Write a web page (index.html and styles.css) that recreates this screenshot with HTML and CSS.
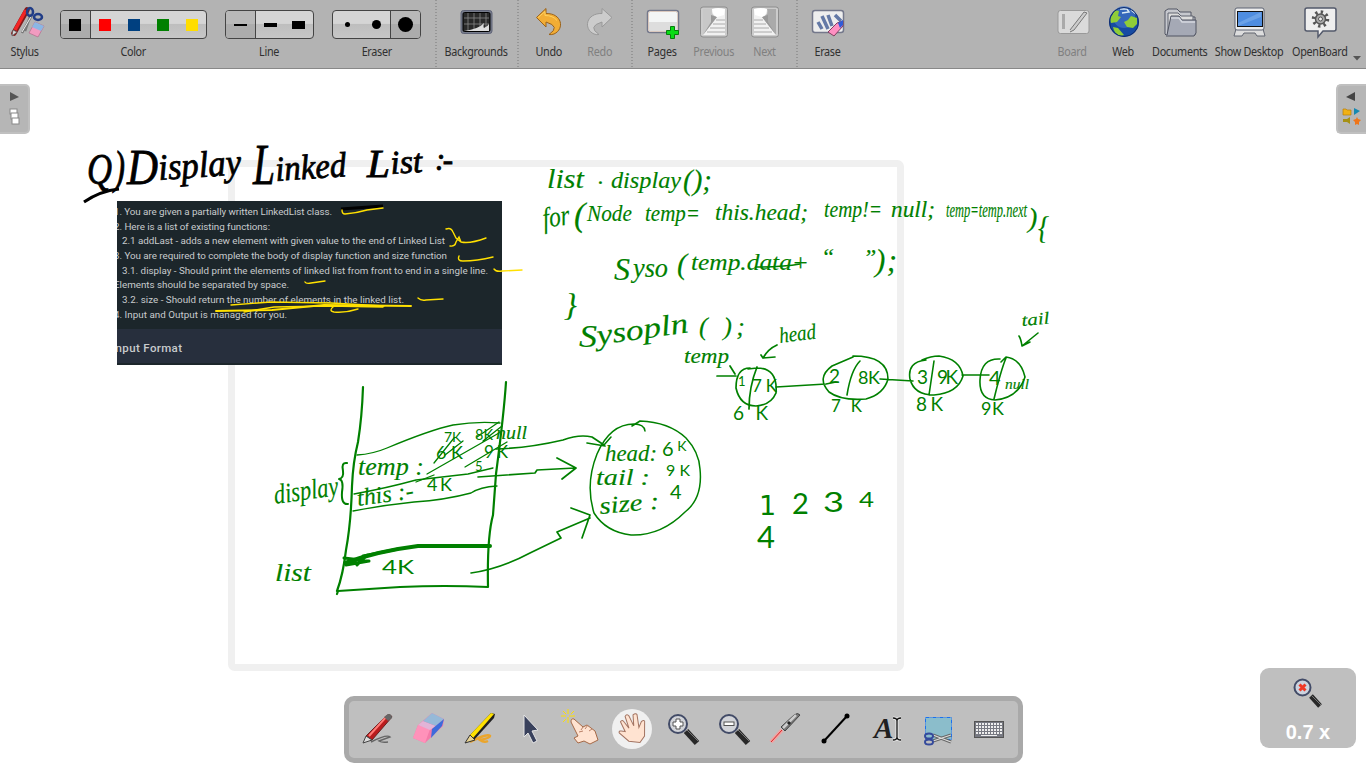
FILE: index.html
```html
<!DOCTYPE html>
<html lang="en">
<head>
<meta charset="utf-8">
<title>OpenBoard</title>
<link rel="stylesheet" href="styles.css">
</head>
<body>
<header class="toolbar">
  <div class="tool stylus"><svg class="icon" viewBox="0 0 40 36"><path d="M9 29 22 6" stroke="#801b1b" stroke-width="5.500" stroke-linecap="round"/><path d="M10 26 21 6" stroke="#f32424" stroke-width="3.500"/><path d="M7 32 8 26 12 28Z" fill="#ddd" stroke="#555" stroke-width=".7"/><path d="m17 29 10-18M20 27l6-17" stroke="#777" stroke-width="2.500"/><path d="m17 28 10-17" stroke="#eee"/><g fill="none" stroke="#213d87" stroke-width="2.500"><ellipse cx="25" cy="8" rx="3" ry="4"/><ellipse cx="33" cy="13" rx="4" ry="3"/></g><path d="m30 18 9 4-6 11-9-4Z" fill="#f19bc0" stroke="#a96583" stroke-width=".6"/><path d="m30 18 9 4-3 5-9-4Z" fill="#8bb7e4"/></svg><span>Stylus</span></div>
  <div class="choice color"><div class="segments"><i class="seg on"><b class="sq black"></b></i><i class="seg"><b class="sq red"></b></i><i class="seg"><b class="sq blue"></b></i><i class="seg"><b class="sq green"></b></i><i class="seg"><b class="sq yellow"></b></i></div><span>Color</span></div>
  <div class="choice line"><div class="segments"><i class="seg on"><b class="ln thin"></b></i><i class="seg"><b class="ln mid"></b></i><i class="seg"><b class="ln thick"></b></i></div><span>Line</span></div>
  <div class="choice eraser"><div class="segments"><i class="seg"><b class="dot small"></b></i><i class="seg"><b class="dot medium"></b></i><i class="seg on last"><b class="dot large"></b></i></div><span>Eraser</span></div>
  <div class="sep"></div>
  <div class="tool backgrounds"><svg class="icon" viewBox="0 0 40 36"><rect x="5" y="6.500" width="31" height="23" rx="2.500" fill="#777c8c" stroke="#606477"/><rect x="7" y="8.500" width="27" height="19" rx="1.500" fill="#292929" stroke="#000"/><path d="M8 14h25M8 20h25M12 9v18M18 9v18M24 9v18M30 9v18" stroke="#888" stroke-width=".8"/><path d="M8 27q15-2 20-8-1 4 0 5 4-2 5-4v7Z" fill="#ddd"/></svg><span>Backgrounds</span></div>
  <div class="sep"></div>
  <div class="pair"><div class="tool"><svg class="icon" viewBox="0 0 40 36"><path d="M7.500 13.500 17 4.500v5C33 9 36 25 25 30q-3 1-5 .5 12-8-3-12.500v5Z" fill="#f2ad35" stroke="#9b6219"/><path d="m9 13.500 7-6v4q8 0 12 5" fill="none" stroke="#ffd260"/></svg><span>Undo</span></div><div class="tool off"><svg class="icon" viewBox="0 0 40 36"><path d="M32 13.500 22 4.500v5C6 9 3 25 14 30q3 1 5 .5-12-8 3-12.500v5Z" fill="#ccc" stroke="#999"/></svg><span>Redo</span></div></div>
  <div class="sep"></div>
  <div class="pair"><div class="tool"><svg class="icon" viewBox="0 0 40 36"><rect x="4.500" y="6.500" width="31" height="22" rx="2.500" fill="#f3f5f5" stroke="#74788b" stroke-width="1.500"/><path d="M6 18h28v9H6Z" fill="#ddd"/><rect x="5.500" y="7.500" width="29" height="20" rx="2" fill="none" stroke="#dac8bd"/><path d="M27.500 22.500h4v4h4v4h-4v4h-4v-4h-4v-4h4Z" fill="#09dc16" stroke="#087d0c"/></svg><span>Pages</span></div><div class="tool off"><svg class="icon" viewBox="0 0 40 36"><rect x="6.500" y="3" width="27" height="30" rx="2.500" fill="#ccc" stroke="#8c8c8c"/><path d="M9 5h9q-3 5 5 8L9 31Z" fill="#c8c8c8"/><path d="M19 5h12v26H9l14-18q-7-2-4-8Z" fill="#f1f1f1"/><path d="m9 31 14-18-6-2v7Z" fill="#999"/><path d="M18 5q6-2 13 0l-1 6-7 2q-5-3-5-8" fill="#fff"/><path d="M22 16h9M19 20h12M16 24h15M13 28h18" stroke="#aaa"/></svg><span>Previous</span></div><div class="tool off"><svg class="icon mirror" viewBox="0 0 40 36"><rect x="6.500" y="3" width="27" height="30" rx="2.500" fill="#ccc" stroke="#8c8c8c"/><path d="M9 5h9q-3 5 5 8L9 31Z" fill="#aaa"/><path d="M19 5h12v26H9l14-18q-7-2-4-8Z" fill="#f1f1f1"/><path d="m9 31 14-18-6-2v7Z" fill="#999"/><path d="M18 5q6-2 13 0l-1 6-7 2q-5-3-5-8" fill="#fff"/><path d="M22 16h9M19 20h12M16 24h15M13 28h18" stroke="#aaa"/></svg><span>Next</span></div></div>
  <div class="sep"></div>
  <div class="tool erase"><svg class="icon" viewBox="0 0 40 36"><rect x="4.500" y="6.500" width="31" height="22" rx="2.500" fill="#eee" stroke="#74788b" stroke-width="1.500"/><path d="M10 18l4 7M14 12l6 13M20 11l4 11M27 11l6 6" stroke="#6479a6" stroke-width="3.500"/><path d="m20 28 9-9 6-2v5l-9 10Z" fill="#ff90c2" stroke="#80405f"/><path d="m30 19 5-3v5l-3 3Z" fill="#315bd8"/></svg><span>Erase</span></div>
  <nav class="modes">
    <div class="tool off"><svg class="icon" viewBox="0 0 40 36"><rect x="5" y="6.500" width="31" height="23" rx="2.500" fill="#dadada" stroke="#999"/><path d="M9 10h3v15H9Z" fill="#aaa"/><path d="m17 26 14-18 3 1-13 17-4 2" fill="#ccc" stroke="#777"/></svg><span>Board</span></div>
    <div class="tool"><svg class="icon" viewBox="0 0 40 36"><circle cx="20" cy="18" r="15" fill="#174ba3"/><circle cx="20" cy="13" r="11" fill="#477acc" opacity=".6"/><path d="m6 15 5-9 4 1-1 5 3 1-4 5-6 1ZM20 18l4-2 3-4 6 2v6l-4 4-6-1ZM9 23l5 1 6 7-3 1q-7-2-8-9" fill="#90cd38"/><path d="M16 5h7l2 3-7 1M27 6l5 4" stroke="#d8e9f4" stroke-width="1.500" fill="none"/><circle cx="20" cy="18" r="14.500" fill="none" stroke="#102c6c"/></svg><span>Web</span></div>
    <div class="tool documents"><svg class="icon" viewBox="0 0 40 36"><path d="M5 30V7l3-2h9l3 3h11v5h4v18H6Z" fill="#c6c8ce" stroke="#505462"/><path d="M8 30V9h10l3 3h12v17" fill="#ddd" stroke="#606471"/><path d="M7 31 11 12h8l3 4h14v13l-2 3H6" fill="#a5a9b5" stroke="#505462"/><path d="M11 14h8l3 4h13" stroke="#d5d8df" stroke-width="1.500" fill="none"/></svg><span>Documents</span></div>
    <div class="tool desktop"><svg class="icon" viewBox="0 0 40 36"><path d="M7 25h27l2 7h-8l-2-3H15l-2 3H5Z" fill="#ddd" stroke="#626671"/><rect x="6" y="4" width="29" height="22" rx="2" fill="#eee" stroke="#5c6272"/><rect x="8.500" y="7.500" width="25" height="15" fill="#4f8de0" stroke="#111"/><path d="m9 19 23-11v5L9 22Z" fill="#89b7ee" opacity=".5"/></svg><span>Show Desktop</span></div>
    <div class="tool app"><svg class="icon" viewBox="0 0 40 36"><path d="M7 4h27q2 0 2 2v19q0 2-2 2H23l-5 6v-6H7q-2 0-2-2V6q0-2 2-2Z" fill="#eee" stroke="#53596b" stroke-width="1.500"/><circle cx="20.500" cy="15" r="7" fill="none" stroke="#555" stroke-width="3.500" stroke-dasharray="2.300 3.197"/><circle cx="20.500" cy="15" r="5" fill="#aaa" stroke="#555" stroke-width="1.500"/><circle cx="20.500" cy="15" r="2" fill="#eee" stroke="#555"/></svg><span>OpenBoard</span></div>
    <svg class="more" viewBox="0 0 8 5"><path d="M0 0h8L4 4.500Z" fill="#555"/></svg>
  </nav>
</header>

<main class="board">
<svg class="canvas" viewBox="0 69 1366 699">
  <defs><clipPath id="shot"><rect x="117" y="201" width="385" height="164"/></clipPath></defs>
  <rect x="231.500" y="163.500" width="669" height="504" rx="3" fill="none" stroke="#f0f0f0" stroke-width="7"/>
  <g clip-path="url(#shot)">
    <rect x="117" y="201" width="385" height="164" fill="#1c262b"/><rect x="117" y="329" width="385" height="34" fill="#272f3d"/>
    <g class="notes">
      <text x="114" y="214.500" textLength="218">1. You are given a partially written LinkedList class.</text>
      <text x="114" y="229.500" textLength="156">2. Here is a list of existing functions:</text>
      <text x="122" y="244" textLength="323">2.1 addLast - adds a new element with given value to the end of Linked List</text>
      <text x="114" y="258.500" textLength="333">3. You are required to complete the body of display function and size function</text>
      <text x="122" y="273.500" textLength="366">3.1. display - Should print the elements of linked list from front to end in a single line.</text>
      <text x="114" y="288" textLength="175">Elements should be separated by space.</text>
      <text x="122" y="303" textLength="282">3.2. size - Should return the number of elements in the linked list.</text>
      <text x="114" y="317.500" textLength="173">4. Input and Output is managed for you.</text>
      <text x="112" y="351.500" textLength="70" class="heading">Input Format</text>
    </g>
  </g>
  <path d="m341 209 42-3" stroke="#000" stroke-width="3"/>
  <g class="gold">
    <path d="M342 210q0 4 3 4 12-1 22-4l16-2M446 229q5-2 7 3l3 6 5 4M450 246q5 1 6-4l3-5 2 5q9 2 25-4M459 256q-2 5 4 5 14 0 30-4M494 269q2 3 8 2l20-1M305 282q1 2 6 1l14-2M418 298q3 3 8 2l17-1M334 306q-6 5 0 6 12 1 24-3"/>
    <path d="m231 305 40-3 60 1 53 3M244 312l30-5 54-1 55 1"/><path d="m216 311 56-1 52-5 87 1" stroke-width="2"/>
  </g>
  <g class="hand title">
    <text x="87" y="184" font-size="45" textLength="25" lengthAdjust="spacingAndGlyphs">Q</text><text x="114" y="183" font-size="46" textLength="11" lengthAdjust="spacingAndGlyphs">)</text>
    <text x="127" y="184" font-size="50" textLength="31" lengthAdjust="spacingAndGlyphs">D</text><text transform="translate(159 180) rotate(-4)" font-size="37" textLength="83" lengthAdjust="spacingAndGlyphs">isplay</text>
    <text x="253" y="184" font-size="57" textLength="22" lengthAdjust="spacingAndGlyphs">L</text><text transform="translate(276 181) rotate(-4)" font-size="35" textLength="71" lengthAdjust="spacingAndGlyphs">inked</text>
    <text x="367" y="177" font-size="39" textLength="23" lengthAdjust="spacingAndGlyphs">L</text><text transform="translate(391 174) rotate(-4)" font-size="33" textLength="32" lengthAdjust="spacingAndGlyphs">ist</text><text x="435" y="170" font-size="31" textLength="18">:-</text>
    <path d="M84 202q16-11 35-13"/>
  </g>
  <g class="hand code">
    <text x="547" y="188" font-size="27" textLength="37" lengthAdjust="spacingAndGlyphs">list</text><text x="598" y="184">.</text><text x="611" y="188" textLength="70" lengthAdjust="spacingAndGlyphs">display</text><text x="683" y="190" font-size="29" textLength="29">();</text>
    <text transform="translate(544 228) rotate(-8)" font-size="29" textLength="27" lengthAdjust="spacingAndGlyphs">for</text><text x="574" y="226" font-size="34" textLength="12">(</text><text x="587" y="221" textLength="45" lengthAdjust="spacingAndGlyphs">Node</text><text x="645" y="221" textLength="55" lengthAdjust="spacingAndGlyphs">temp=</text><text x="715" y="220" textLength="93" lengthAdjust="spacingAndGlyphs">this.head;</text><text x="824" y="217" textLength="58" lengthAdjust="spacingAndGlyphs">temp!=</text><text x="891" y="217" textLength="44" lengthAdjust="spacingAndGlyphs">null;</text><text x="946" y="217" font-size="20" textLength="81" lengthAdjust="spacingAndGlyphs">temp=temp.next</text><text x="1028" y="227" font-size="28" textLength="9">)</text><text x="1038" y="239" font-size="31" textLength="11" lengthAdjust="spacingAndGlyphs">{</text>
    <text x="614" y="280" font-size="32" textLength="18">S</text><text x="633" y="277" font-size="27" textLength="35" lengthAdjust="spacingAndGlyphs">yso</text><text x="677" y="274" font-size="30">(</text><text x="691" y="270" textLength="118" lengthAdjust="spacingAndGlyphs">temp.data+</text><text x="821" y="265">“</text><text x="863" y="265">”</text><text x="875" y="271" font-size="31" textLength="22">);</text><path d="M755 267q28 0 45-3"/>
    <text x="564" y="316" font-size="32">}</text>
    <text x="579" y="347" font-size="31" textLength="18" lengthAdjust="spacingAndGlyphs">S</text><text transform="translate(598 345) rotate(-8)" font-size="29" textLength="92" lengthAdjust="spacingAndGlyphs">ysopln</text><text x="699" y="335" font-size="26" textLength="46">( );</text>
    <text x="684" y="363" font-size="20" textLength="45" lengthAdjust="spacingAndGlyphs">temp</text><text transform="translate(780 343) rotate(-7)" font-size="22" textLength="37" lengthAdjust="spacingAndGlyphs">head</text><text transform="translate(1022 326) rotate(-5)" font-size="17" textLength="28" lengthAdjust="spacingAndGlyphs">tail</text>
    <text x="358" y="475" font-size="25" textLength="66" lengthAdjust="spacingAndGlyphs">temp :</text><text transform="translate(358 506) rotate(-8)" font-size="24" textLength="57" lengthAdjust="spacingAndGlyphs">this :-</text>
    <text transform="translate(275 504) rotate(-8)" font-size="28" textLength="65" lengthAdjust="spacingAndGlyphs">display</text><text x="275" y="581" font-size="26" textLength="36" lengthAdjust="spacingAndGlyphs">list</text><text x="496" y="439" font-size="19" textLength="31" lengthAdjust="spacingAndGlyphs">null</text>
    <text x="605" y="461" textLength="52" lengthAdjust="spacingAndGlyphs">head:</text><text x="596" y="485" textLength="54" lengthAdjust="spacingAndGlyphs">tail :</text><text transform="translate(600 514) rotate(-5)" textLength="60" lengthAdjust="spacingAndGlyphs">size :</text><text x="1005" y="389" font-size="15" textLength="24" lengthAdjust="spacingAndGlyphs">null</text>
  </g>
  <g class="digits">
    <text x="427" y="491" font-size="18" textLength="25">4K</text><text x="436" y="459" font-size="18" textLength="27">6K</text><text x="444" y="442" font-size="14">7K</text><text x="475" y="440" font-size="15" textLength="18" lengthAdjust="spacingAndGlyphs">8K</text><text x="484" y="458" font-size="17" textLength="24">9K</text><text x="475" y="471" font-size="13">5</text><text x="382" y="574" font-size="20" textLength="32" lengthAdjust="spacingAndGlyphs">4K</text>
    <text x="662" y="456" font-size="20">6<tspan dy="-5" font-size="14"> K</tspan></text><text x="666" y="476" font-size="16">9 K</text><text x="670" y="499" font-size="20">4</text>
    <text x="738" y="386" font-size="13">1</text><text x="752" y="392" font-size="17" textLength="25">7K</text><text x="829" y="383" font-size="19">2</text><text x="858" y="384" font-size="18" textLength="22">8K</text><text x="917" y="384" font-size="19">3</text><text x="937" y="384" font-size="19" textLength="21">9K</text><text x="989" y="385" font-size="20">4</text>
    <text x="733" y="420" font-size="19" textLength="35">6 K</text><text x="831" y="412" font-size="17" textLength="31">7 K</text><text x="916" y="411" font-size="19" textLength="27">8K</text><text x="981" y="415" font-size="18" textLength="23">9K</text>
    <text x="759" y="515" font-size="27" class="slab">1</text><text x="792" y="514" font-size="29" textLength="18">2</text><text x="823" y="512" font-size="27" textLength="21" lengthAdjust="spacingAndGlyphs">3</text><text x="859" y="507" font-size="22" textLength="15" lengthAdjust="spacingAndGlyphs">4</text><text x="757" y="548" font-size="31">4</text>
  </g>
  <g class="ink">
    <path d="M363 387q-1 30-5 55-5 20-6 44-1 37-6 64-3 25-9 41M506 382q-2 31-10 92l-3 41q-6 22-5 72M337 594l1-3 62-4q45-2 88 0" stroke-width="2.200"/>
    <path d="M357 455q16-1 30-7 43-18 66-23 24-4 47-2M354 494q33-6 62-14l52-6 25-6M353 511q31-6 61-9 31-2 57-9 9-6 26-7"/>
    <path d="M345 563q33-12 73-17l72 0" stroke-width="4"/><path d="m344 558 25 3-23 4 21-10-10 10 6-9 35-7" stroke-width="3"/><path d="M347 463q-6-1-4 8 1 7-4 8 5 1 3 13-1 13 6 12" stroke-width="2"/>
    <path d="m427 474 72-41M434 463l20-25m-9 17 18-14M477 437l22-15m-16 19 19-15M465 467l42-25M416 482l18-7"/>
    <path d="M496 449q33-1 67-9 16-6 29-3l12 8m-17-2 18 3M478 477l57-4 2-3 38-2m-18-10 19 10-14 11M471 573q29-4 59-20l31-15-4-6 33-14m-19-10 19 7-8 23" stroke-width="1.700"/>
    <path d="M604 445l7-8m21-11 8-5q29 1 46 17 13 14 14 31 3 29-15 43-24 24-54 23-25-3-37-22-9-29 3-59 13-30 37-30m0 0q10 0 11 7" stroke-width="1.500"/>
    <path d="M750 368q-14 0-14 20 4 18 20 18 15-1 20-13 2-25-19-25l-9 1M757 367q-8 20-8 42M717 376h19m-6-10 5 8M777 345q-9 4-14 13l-2-3m2 3 12-1" stroke-width="1.700"/>
    <path d="m853 357-21 9q-16 12-3 26 12 9 37 7 18-5 22-20 0-23-35-23M860 361q-9 9-13 34M776 387l50-3 10-2M880 379l33 2M926 360q-19 2-16 19 4 16 24 16 24-2 29-19-3-17-24-20-8 0-17 4M934 361l-5 34M962 375h27M1000 359q-19-1-20 21-1 19 15 20 23-2 30-23-4-18-19-20l-5 5M1006 358q-5 12-12 41M1019 336q2 3 3 10m16-13-16 13 8-4" stroke-width="1.600"/>
  </g>
</svg>

<aside class="dock left"><svg viewBox="0 0 30 50"><path d="m10 8 9 5-9 4Z" fill="#555"/><g fill="#fff" stroke="#888"><rect x="10" y="25" width="7" height="5"/><rect x="11" y="29" width="7" height="6"/><rect x="12" y="34" width="7" height="6"/></g></svg></aside>
<aside class="dock right"><svg viewBox="0 0 30 50"><path d="m19 8-9 5 9 4Z" fill="#444"/><path d="M7 25h3l1 1h4v5H7Z" fill="#f1b116" stroke="#b77e08" stroke-width=".7"/><path d="m18 24 6 3-6 4Z" fill="#1689b1"/><path d="M14 33v7l-3-2H7v-3h4Z" fill="#a69114"/><path d="m21 33 1 2 3 1-2 2v3l-2-1-2 1v-3l-2-2 3-1Z" fill="#ef7519"/></svg></aside>

<div class="zoom"><svg viewBox="0 0 34 34"><path d="m20 20 9 10" stroke="#282828" stroke-width="5"/><path d="m21 20 9 9" stroke="#777"/><circle cx="11.500" cy="11.500" r="8" fill="#ccd3df" stroke="#424b67" stroke-width="2"/><path d="m8.500 8.500 6 6m0-6-6 6" stroke="#ef3927" stroke-width="3"/></svg><span>0.7 x</span></div>

<div class="palette">
  <svg viewBox="0 0 40 40"><path d="M14 33q16-8 19-5l-11 4q3 2 9 1" fill="none" stroke="#666" stroke-width="1.500"/><path d="m9 27 20-20q4-3 6 1L15 31Z" fill="#b91c1e" stroke="#622"/><path d="m12 27 18-20" stroke="#ff7b76" stroke-width="2"/><path d="m27 8 4-3q4 0 4 4l-4 3Z" fill="#666"/><path d="m6 34 3-7 6 4Z" fill="#ddd" stroke="#444"/></svg>
  <svg viewBox="0 0 40 40"><path d="m5 29 5-13L24 4l12 6-1 7L17 34Z" fill="#f47ba9"/><path d="m10 16 12 4-5 14-12-5Z" fill="#ff92ba"/><path d="m10 16 5-4 13 5-6 4Z" fill="#e2b4d7"/><path d="m15 12 9-8 12 6-8 7Z" fill="#96b9d8"/><path d="m36 10-2 7-11 12 1-9Z" fill="#3d6bdb"/></svg>
  <svg viewBox="0 0 40 40"><path d="M11 33q17-9 20-6 0 2-10 4 4 3 8 1" fill="none" stroke="#eba52b" stroke-width="2.500"/><path d="m11 26 21-22 4 1-1 4-20 22Z" fill="#202020"/><path d="m11 26 21-22 3 1-21 24Z" fill="#ffe100"/><path d="m6 34 5-8 5 5Z" fill="#e8d391" stroke="#333"/></svg>
  <svg viewBox="0 0 40 40"><path d="m14 6 14 15-6 1 5 10-4 2-5-10-4 4Z" fill="#39415c" stroke="#e5e5e5"/></svg>
  <svg class="click" viewBox="0 0 40 40"><path d="M0 7h5m3 0h6M7 0v5m0 3v6M2 2l3 3m5 5 3 3m0-11-3 3M5 10l-3 3" stroke="#ffe000"/><path d="m13 10 9 8 4-2 8 6 3 9-8 4-6-3-6 2-4-5 4-2-7-14q0-4 3-3Z" fill="#ffe3d1" stroke="#a56947"/><path d="m18 23 4-1m0-4-2 3m7-5-3 4m7 0-3 2" stroke="#b98168"/></svg>
  <svg class="selected" viewBox="0 0 40 40"><circle cx="20" cy="20" r="20" fill="#eee"/><path d="m13 22-4-10q2-3 4 1l4 6-3-12q2-3 4 0l4 10 0-11q3-2 4 0l1 13 3-6q4-2 3 2l-1 13-5 6-11-2-9-9q-1-3 6-1Z" fill="#ffe3d1" stroke="#a27361" transform="rotate(-4 20 20)"/></svg>
  <svg viewBox="0 0 40 40"><path d="m23 22 11 12" stroke="#282828" stroke-width="6"/><path d="m24 21 11 11" stroke="#777"/><circle cx="15" cy="15" r="9" fill="#d2d4d9" stroke="#424b67" stroke-width="2"/><path d="M13 10h4v3h3v4h-3v3h-4v-3h-3v-4h3Z" fill="#fff" stroke="#555"/></svg>
  <svg viewBox="0 0 40 40"><path d="m23 22 11 12" stroke="#282828" stroke-width="6"/><path d="m24 21 11 11" stroke="#777"/><circle cx="15" cy="15" r="9" fill="#d2d4d9" stroke="#424b67" stroke-width="2"/><rect x="10" y="13" width="10" height="3.500" fill="#fff" stroke="#555"/></svg>
  <svg viewBox="0 0 40 40"><path d="m6 33 11-12" stroke="#f2a2a2" stroke-width="4"/><path d="m6 33 11-12" stroke="#d82725"/><path d="m16 18 13-12q4-3 6 0L20 22Z" fill="#777" stroke="#444"/><path d="m18 19 13-13" stroke="#ccc" stroke-width="2.500"/><path d="m23 15 2-2" stroke="#222" stroke-width="3"/></svg>
  <svg viewBox="0 0 40 40"><path d="M8 32 31 7" stroke="#000" stroke-width="2"/><circle cx="8" cy="32" r="2.500"/><circle cx="31" cy="7" r="2.500"/></svg>
  <svg viewBox="0 0 40 40"><text x="7" y="29" font-family="Liberation Serif" font-size="29" font-weight="bold" font-style="italic" fill="#202020">A</text><path d="M26 9q4 0 4 3v16q0 3-4 3m8-22q-4 0-4 3v16q0 3 4 3" fill="none" stroke="#eee" stroke-width="3"/><path d="M26 9q4 0 4 3v16q0 3-4 3m8-22q-4 0-4 3v16q0 3 4 3" fill="none" stroke="#111" stroke-width="1.300"/></svg>
  <svg viewBox="0 0 40 40"><rect x="7.500" y="8.500" width="26" height="22" fill="#8bbdcb" stroke="#1b71ee" stroke-dasharray="4 1 1 1"/><path d="m15 26 18 7m-18-1 18-6" stroke="#666" stroke-width="3"/><path d="m15 26 18 7m-18-1 18-6" stroke="#ddd" stroke-width="1.300"/><g fill="none" stroke="#354a9b" stroke-width="2"><ellipse cx="11" cy="27" rx="4" ry="2.500"/><ellipse cx="11" cy="33" rx="4" ry="2.500"/></g></svg>
  <svg viewBox="0 0 40 40"><rect x="5.500" y="12.500" width="29" height="16" fill="#777982" stroke="#555"/><path d="M7 15h26M7 18h26M7 21h26M7 24h26" stroke="#eee" stroke-width="2" stroke-dasharray="2 1"/><path d="M12 26.500h16" stroke="#eee"/></svg>
</div>
</main>
</body>
</html>
```

FILE: styles.css
```css
* { box-sizing: border-box; }
body { margin: 0; width: 1366px; height: 768px; overflow: hidden; background: #fff; display: flex; flex-direction: column; font-family: "Noto Sans", sans-serif; }
.toolbar { height: 69px; flex: none; display: flex; background: #b3b3b3; border-bottom: 1px solid #888; color: #303030; font-size: 12px; line-height: 16px; letter-spacing: -.35px; }
.toolbar span { transform: scaleX(.9); }
.tool { width: 51px; flex: none; padding-top: 4px; display: flex; flex-direction: column; align-items: center; gap: 4px; white-space: nowrap; }
.icon { width: 40px; height: 36px; fill: none; flex: none; }
.mirror { transform: scaleX(-1); }
.off { color: #808080; }
.stylus { width: 50px; margin-right: 10px; }
.choice { padding-top: 10px; display: flex; flex-direction: column; align-items: center; gap: 5px; }
.color { width: 147px; margin-right: 18px; }
.line { width: 89px; margin-right: 18px; }
.eraser { width: 89px; margin-right: 14px; }
.segments { width: 100%; height: 29px; display: flex; border: 1px solid #444; border-radius: 4px; background: linear-gradient(#d5d5d5 0 46%, #bebebe 50%, #c7c7c7); overflow: hidden; }
.seg { flex: 1; display: flex; align-items: center; justify-content: center; }
.seg.on { background: linear-gradient(#b9b9b9 50%, #acacac 50%); border-right: 1px solid #444; }
.seg.last { border-right: 0; border-left: 1px solid #444; }
.sq { width: 12px; height: 12px; }
.black { background: #000; } .red { background: #f00; } .blue { background: #004080; } .green { background: #008000; } .yellow { background: #fd0; }
.ln { width: 13px; background: #000; } .thin { height: 2px; } .mid { height: 4px; } .thick { height: 8px; }
.dot { border-radius: 50%; background: #000; } .small { width: 5px; height: 5px; } .medium { width: 9px; height: 9px; } .large { width: 15px; height: 15px; }
.sep { width: 2px; flex: none; background: repeating-linear-gradient(#959595 0 1px, transparent 1px 3px); }
.backgrounds { width: 80px; padding-right: 2px; }
.pair { display: flex; padding: 0 6px 0 4px; }
.erase { margin-left: 4px; }
.modes { display: flex; margin-left: auto; }
.documents { width: 62px; } .desktop { width: 76px; } .app { width: 66px; }
.more { width: 8px; height: 5px; margin: 56px 5px 0 0; }
.board { flex: 1; position: relative; }
.canvas { display: block; width: 1366px; height: 699px; }
.notes { font-family: Roboto, sans-serif; font-size: 9.800px; fill: #c8cbcd; }
.notes .heading { font-size: 11.500px; font-weight: 500; }
.gold { fill: none; stroke: #ffe000; stroke-width: 1.400; stroke-linecap: round; }
.hand { font-family: "Liberation Serif", serif; font-style: italic; }
.title { fill: #000; stroke: #000; stroke-width: .8; }
.title path { fill: none; stroke-width: 3; }
.code { font-size: 24px; fill: #008000; stroke: #008000; stroke-width: .15; }
.code path { fill: none; stroke-width: 1.500; }
.digits { font-family: Lato, sans-serif; fill: #008000; }
.slab { font-family: "DejaVu Sans", sans-serif; }
.ink { fill: none; stroke: #008000; stroke-width: 1.300; stroke-linecap: round; stroke-linejoin: round; }
.dock { position: absolute; top: 15px; width: 30px; height: 50px; background: #b6b6b6; border: 2px solid #c0c0c0; }
.dock svg { display: block; width: 30px; height: 50px; margin: -2px; }
.left { left: 0; border-left: 0; border-radius: 0 5px 5px 0; }
.left svg { margin-left: 0; }
.right { right: 0; border-right: 0; border-radius: 5px 0 0 5px; }
.palette { position: absolute; left: 344px; top: 627px; width: 679px; height: 67px; border: 5px solid #a9a9a9; border-radius: 10px; background: #bfbfbf; display: flex; align-items: center; justify-content: center; gap: 11px; padding: 0 1px 1px 0; }
.palette svg { width: 40px; height: 40px; flex: none; fill: none; }
.palette .click { overflow: visible; }
.palette svg circle { fill: #000; }
.palette svg circle[stroke] { fill: #d2d4d9; }
.palette .selected circle { fill: #f0f0f0; }
.zoom { position: absolute; left: 1260px; top: 599px; width: 96px; height: 80px; background: #bfbfbf; border-radius: 9px; display: flex; flex-direction: column; align-items: center; padding-top: 8px; gap: 10px; color: #fff; font: bold 20px/24px "Liberation Sans", sans-serif; }
.zoom svg { width: 34px; height: 34px; flex: none; }
.zoom span { transform: scaleX(1); }
```
